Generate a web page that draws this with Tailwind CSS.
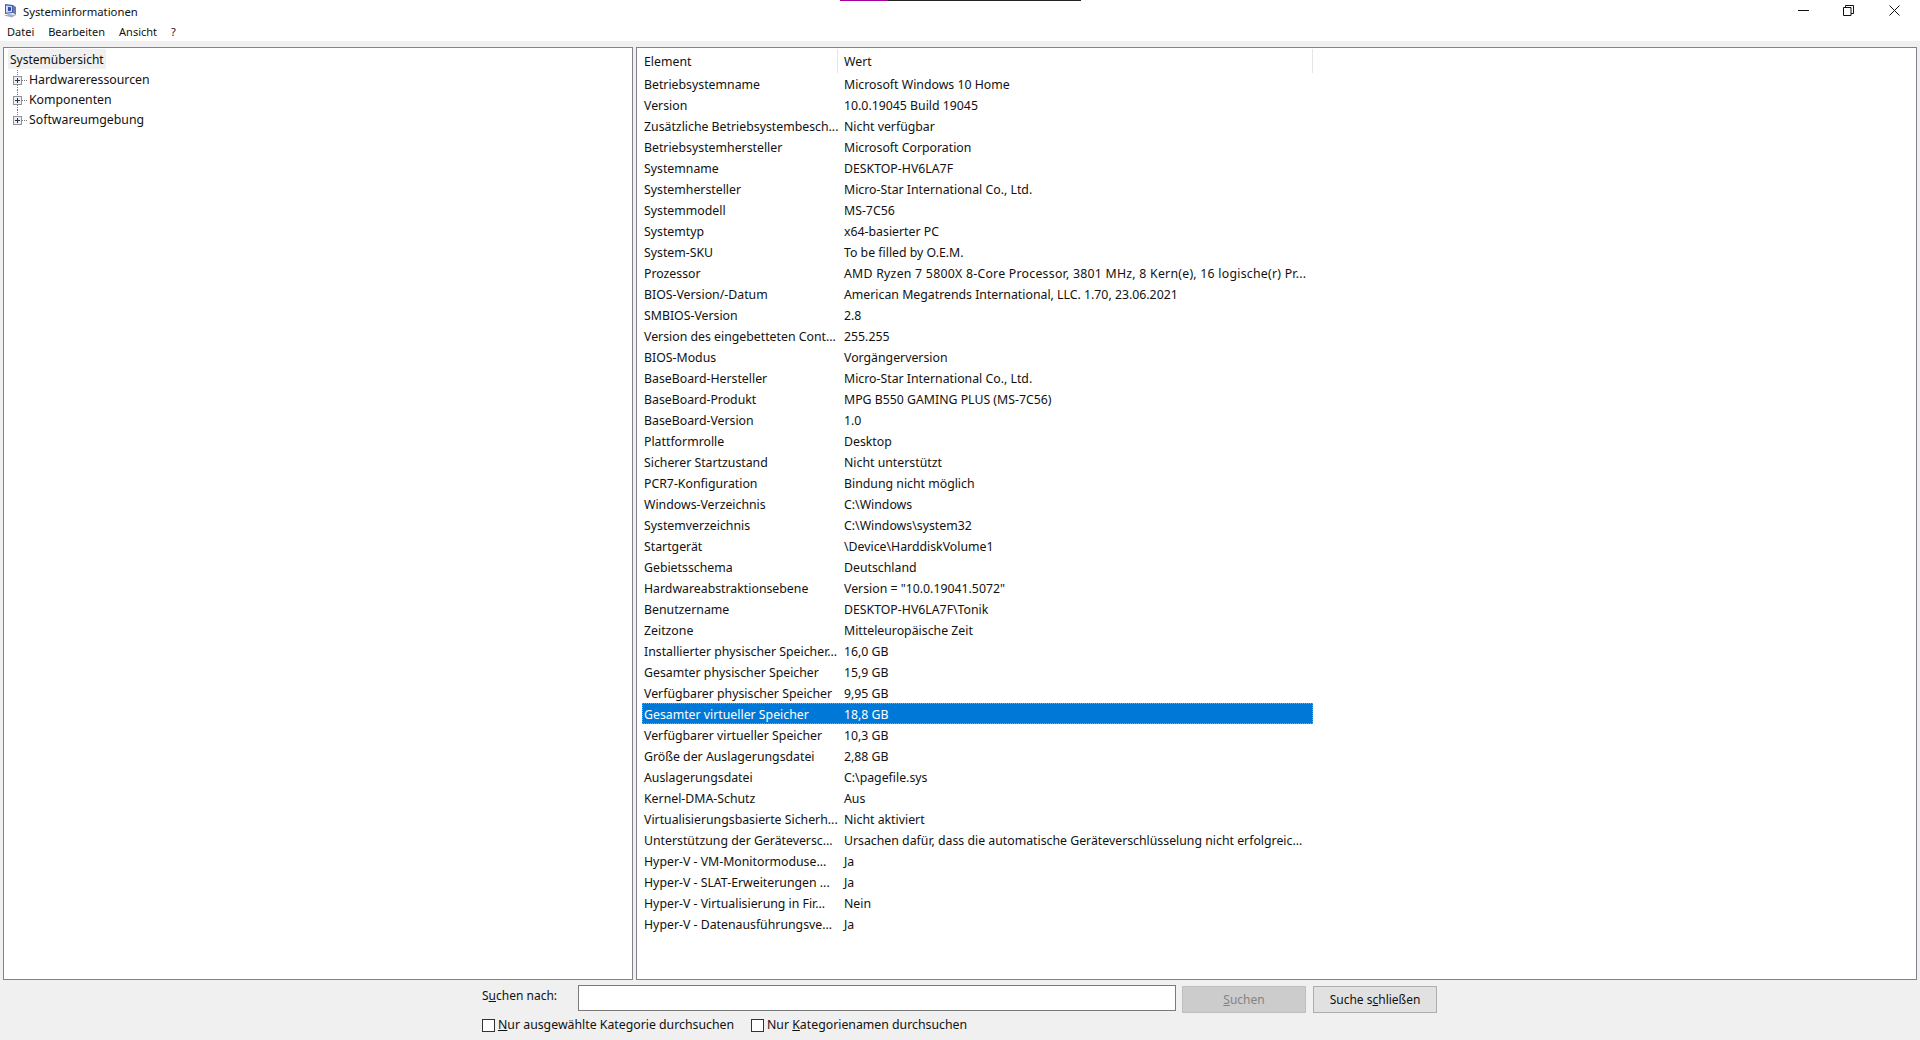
<!DOCTYPE html>
<html lang="de">
<head>
<meta charset="utf-8">
<title>Systeminformationen</title>
<script src="https://cdn.jsdelivr.net/npm/@tailwindcss/browser@4"></script>
</head>
<body class="w-[1920px] h-[1040px] overflow-hidden bg-[#f0f0f0] text-[12px] text-[#111] font-['Noto_Sans','Open_Sans',sans-serif]">

<!-- title + menu -->
<header class="relative h-[41px] bg-white">
  <div class="absolute top-0 left-[840px] flex h-[1px]">
    <div class="w-[48px] bg-[#a0009c]"></div>
    <div class="w-[193px] bg-[#222]"></div>
  </div>
  <div class="flex h-[25px] items-center">
    <svg class="self-start mt-[3px] ml-[3px] w-[15px] h-[15px]" viewBox="0 0 15 15">
      <path d="M2 1l8 1v8l-8 1z" fill="#3f5fb8"/>
      <path d="M3 2.500l6 .7v5.800l-6 .7z" fill="#cfdcf7"/>
      <path d="M5 4l3 .3v3.400l-3 .3z" fill="#2d4aa6"/>
      <path d="M10 2l3 2v8l-3-2z" fill="#6f7a94"/>
      <path d="M1 12.500l5-1.500 7 1-4 2.500z" fill="#a4adc0"/>
    </svg>
    <span class="ml-[5px] text-[11.3px]">Systeminformationen</span>
    <div class="ml-auto self-start mt-[5px] flex">
      <svg class="w-[11px] h-[11px] mr-[34px]" viewBox="0 0 11 11"><path d="M0 5.500h11" stroke="#111" fill="none"/></svg>
      <svg class="w-[11px] h-[11px] mr-[35px]" viewBox="0 0 11 11"><path d="M.5 2.500h7.500v8h-7.500zM2.500 2.500v-2h8v8h-2.500" stroke="#111" fill="none"/></svg>
      <svg class="w-[11px] h-[11px] mr-[20px]" viewBox="0 0 11 11"><path d="M.5.5l10 10M10.500.5l-10 10" stroke="#111" fill="none"/></svg>
    </div>
  </div>
  <nav class="flex h-[15px] items-center pl-[7px] gap-[14px] text-[11px]">
    <span>Datei</span><span>Bearbeiten</span><span>Ansicht</span><span>?</span>
  </nav>
</header>

<main class="flex h-[939px] pt-[6px] pl-[3px] pr-[3px] gap-[3px] text-[12.3px]">
  <!-- tree -->
  <section class="w-[630px] bg-white border border-[#82828f] pt-[1px] pl-[4px]">
    <div class="w-[98px] h-[20px] leading-[21px] pl-[2px] whitespace-nowrap bg-[#f0f0f0] text-[12px]">Systemübersicht</div>
    <ul class="pt-[1px]">
      <li class="flex items-center h-[20px]">
        <svg class="w-[21px] h-[20px]" viewBox="0 0 21 20">
          <path d="M9.500 0v6M9.500 15v5M14 10.500h5" stroke="#777" stroke-dasharray="1 1" fill="none"/>
          <rect x="5.500" y="6.500" width="8" height="8" fill="#eef0f5" stroke="#8f90a0"/>
          <path d="M7 10.500h5M9.500 8v5" stroke="#333" fill="none"/>
        </svg>
        <span>Hardwareressourcen</span>
      </li>
      <li class="flex items-center h-[20px]">
        <svg class="w-[21px] h-[20px]" viewBox="0 0 21 20">
          <path d="M9.500 0v6M9.500 15v5M14 10.500h5" stroke="#777" stroke-dasharray="1 1" fill="none"/>
          <rect x="5.500" y="6.500" width="8" height="8" fill="#eef0f5" stroke="#8f90a0"/>
          <path d="M7 10.500h5M9.500 8v5" stroke="#333" fill="none"/>
        </svg>
        <span>Komponenten</span>
      </li>
      <li class="flex items-center h-[20px]">
        <svg class="w-[21px] h-[20px]" viewBox="0 0 21 20">
          <path d="M9.500 0v6M14 10.500h5" stroke="#777" stroke-dasharray="1 1" fill="none"/>
          <rect x="5.500" y="6.500" width="8" height="8" fill="#eef0f5" stroke="#8f90a0"/>
          <path d="M7 10.500h5M9.500 8v5" stroke="#333" fill="none"/>
        </svg>
        <span>Softwareumgebung</span>
      </li>
    </ul>
  </section>

  <!-- list -->
  <section class="flex-1 bg-white border border-[#82828f] pt-[1px] pl-[5px]">
    <div class="flex h-[24px] w-[671px] leading-[26px]">
      <div class="w-[196px] pl-[2px] border-r border-[#e5e5e5]">Element</div>
      <div class="flex-1 pl-[6px] border-r border-[#e5e5e5]">Wert</div>
    </div>
    <div class="w-[671px] leading-[23px] whitespace-nowrap">
      <div class="flex h-[21px]"><div class="w-[196px] pl-[2px]">Betriebsystemname</div><div class="flex-1 pl-[6px]">Microsoft Windows 10 Home</div></div>
      <div class="flex h-[21px]"><div class="w-[196px] pl-[2px]">Version</div><div class="flex-1 pl-[6px]">10.0.19045 Build 19045</div></div>
      <div class="flex h-[21px]"><div class="w-[196px] pl-[2px]">Zusätzliche Betriebsystembesch...</div><div class="flex-1 pl-[6px]">Nicht verfügbar</div></div>
      <div class="flex h-[21px]"><div class="w-[196px] pl-[2px]">Betriebsystemhersteller</div><div class="flex-1 pl-[6px]">Microsoft Corporation</div></div>
      <div class="flex h-[21px]"><div class="w-[196px] pl-[2px]">Systemname</div><div class="flex-1 pl-[6px]">DESKTOP-HV6LA7F</div></div>
      <div class="flex h-[21px]"><div class="w-[196px] pl-[2px]">Systemhersteller</div><div class="flex-1 pl-[6px]">Micro-Star International Co., Ltd.</div></div>
      <div class="flex h-[21px]"><div class="w-[196px] pl-[2px]">Systemmodell</div><div class="flex-1 pl-[6px]">MS-7C56</div></div>
      <div class="flex h-[21px]"><div class="w-[196px] pl-[2px]">Systemtyp</div><div class="flex-1 pl-[6px]">x64-basierter PC</div></div>
      <div class="flex h-[21px]"><div class="w-[196px] pl-[2px]">System-SKU</div><div class="flex-1 pl-[6px]">To be filled by O.E.M.</div></div>
      <div class="flex h-[21px]"><div class="w-[196px] pl-[2px]">Prozessor</div><div class="flex-1 pl-[6px] tracking-[0.25px]">AMD Ryzen 7 5800X 8-Core Processor, 3801 MHz, 8 Kern(e), 16 logische(r) Pr...</div></div>
      <div class="flex h-[21px]"><div class="w-[196px] pl-[2px]">BIOS-Version/-Datum</div><div class="flex-1 pl-[6px]">American Megatrends International, LLC. 1.70, 23.06.2021</div></div>
      <div class="flex h-[21px]"><div class="w-[196px] pl-[2px]">SMBIOS-Version</div><div class="flex-1 pl-[6px]">2.8</div></div>
      <div class="flex h-[21px]"><div class="w-[196px] pl-[2px]">Version des eingebetteten Cont...</div><div class="flex-1 pl-[6px]">255.255</div></div>
      <div class="flex h-[21px]"><div class="w-[196px] pl-[2px]">BIOS-Modus</div><div class="flex-1 pl-[6px]">Vorgängerversion</div></div>
      <div class="flex h-[21px]"><div class="w-[196px] pl-[2px]">BaseBoard-Hersteller</div><div class="flex-1 pl-[6px]">Micro-Star International Co., Ltd.</div></div>
      <div class="flex h-[21px]"><div class="w-[196px] pl-[2px]">BaseBoard-Produkt</div><div class="flex-1 pl-[6px]">MPG B550 GAMING PLUS (MS-7C56)</div></div>
      <div class="flex h-[21px]"><div class="w-[196px] pl-[2px]">BaseBoard-Version</div><div class="flex-1 pl-[6px]">1.0</div></div>
      <div class="flex h-[21px]"><div class="w-[196px] pl-[2px]">Plattformrolle</div><div class="flex-1 pl-[6px]">Desktop</div></div>
      <div class="flex h-[21px]"><div class="w-[196px] pl-[2px]">Sicherer Startzustand</div><div class="flex-1 pl-[6px]">Nicht unterstützt</div></div>
      <div class="flex h-[21px]"><div class="w-[196px] pl-[2px]">PCR7-Konfiguration</div><div class="flex-1 pl-[6px]">Bindung nicht möglich</div></div>
      <div class="flex h-[21px]"><div class="w-[196px] pl-[2px]">Windows-Verzeichnis</div><div class="flex-1 pl-[6px]">C:\Windows</div></div>
      <div class="flex h-[21px]"><div class="w-[196px] pl-[2px]">Systemverzeichnis</div><div class="flex-1 pl-[6px]">C:\Windows\system32</div></div>
      <div class="flex h-[21px]"><div class="w-[196px] pl-[2px]">Startgerät</div><div class="flex-1 pl-[6px]">\Device\HarddiskVolume1</div></div>
      <div class="flex h-[21px]"><div class="w-[196px] pl-[2px]">Gebietsschema</div><div class="flex-1 pl-[6px]">Deutschland</div></div>
      <div class="flex h-[21px]"><div class="w-[196px] pl-[2px]">Hardwareabstraktionsebene</div><div class="flex-1 pl-[6px]">Version = "10.0.19041.5072"</div></div>
      <div class="flex h-[21px]"><div class="w-[196px] pl-[2px]">Benutzername</div><div class="flex-1 pl-[6px]">DESKTOP-HV6LA7F\Tonik</div></div>
      <div class="flex h-[21px]"><div class="w-[196px] pl-[2px]">Zeitzone</div><div class="flex-1 pl-[6px]">Mitteleuropäische Zeit</div></div>
      <div class="flex h-[21px]"><div class="w-[196px] pl-[2px]">Installierter physischer Speicher...</div><div class="flex-1 pl-[6px]">16,0 GB</div></div>
      <div class="flex h-[21px]"><div class="w-[196px] pl-[2px]">Gesamter physischer Speicher</div><div class="flex-1 pl-[6px]">15,9 GB</div></div>
      <div class="flex h-[21px]"><div class="w-[196px] pl-[2px]">Verfügbarer physischer Speicher</div><div class="flex-1 pl-[6px]">9,95 GB</div></div>
      <div class="flex h-[21px] bg-[#0078d7] text-white outline-1 outline-dotted -outline-offset-1 outline-[#ff8c00]"><div class="w-[196px] pl-[2px]">Gesamter virtueller Speicher</div><div class="flex-1 pl-[6px]">18,8 GB</div></div>
      <div class="flex h-[21px]"><div class="w-[196px] pl-[2px]">Verfügbarer virtueller Speicher</div><div class="flex-1 pl-[6px]">10,3 GB</div></div>
      <div class="flex h-[21px]"><div class="w-[196px] pl-[2px]">Größe der Auslagerungsdatei</div><div class="flex-1 pl-[6px]">2,88 GB</div></div>
      <div class="flex h-[21px]"><div class="w-[196px] pl-[2px]">Auslagerungsdatei</div><div class="flex-1 pl-[6px]">C:\pagefile.sys</div></div>
      <div class="flex h-[21px]"><div class="w-[196px] pl-[2px]">Kernel-DMA-Schutz</div><div class="flex-1 pl-[6px]">Aus</div></div>
      <div class="flex h-[21px]"><div class="w-[196px] pl-[2px]">Virtualisierungsbasierte Sicherh...</div><div class="flex-1 pl-[6px]">Nicht aktiviert</div></div>
      <div class="flex h-[21px]"><div class="w-[196px] pl-[2px]">Unterstützung der Geräteversc...</div><div class="flex-1 pl-[6px]">Ursachen dafür, dass die automatische Geräteverschlüsselung nicht erfolgreic...</div></div>
      <div class="flex h-[21px]"><div class="w-[196px] pl-[2px]">Hyper-V - VM-Monitormoduse...</div><div class="flex-1 pl-[6px]">Ja</div></div>
      <div class="flex h-[21px]"><div class="w-[196px] pl-[2px]">Hyper-V - SLAT-Erweiterungen ...</div><div class="flex-1 pl-[6px]">Ja</div></div>
      <div class="flex h-[21px]"><div class="w-[196px] pl-[2px]">Hyper-V - Virtualisierung in Fir...</div><div class="flex-1 pl-[6px]">Nein</div></div>
      <div class="flex h-[21px]"><div class="w-[196px] pl-[2px]">Hyper-V - Datenausführungsve...</div><div class="flex-1 pl-[6px]">Ja</div></div>
    </div>
  </section>
</main>

<!-- search -->
<footer class="pt-[5px] pl-[482px]">
  <div class="flex h-[28px]">
    <label class="w-[96px] pt-[2px]">S<u>u</u>chen nach:</label>
    <div class="w-[598px] h-[26px] bg-white border border-[#7a7a7a]"></div>
    <button class="ml-[6px] mt-[1px] w-[124px] h-[27px] bg-[#cccccc] border border-[#bfbfbf] text-[#838383]"><u>S</u>uchen</button>
    <button class="ml-[7px] mt-[1px] w-[124px] h-[27px] bg-[#e1e1e1] border border-[#adadad]">Suche s<u>c</u>hließen</button>
  </div>
  <div class="flex items-center h-[20px] mt-[2px] text-[12.3px]">
    <span class="w-[13px] h-[13px] bg-white border border-[#333]"></span>
    <span class="ml-[3px] w-[253px]"><u>N</u>ur ausgewählte Kategorie durchsuchen</span>
    <span class="w-[13px] h-[13px] bg-white border border-[#333]"></span>
    <span class="ml-[3px]">Nur <u>K</u>ategorienamen durchsuchen</span>
  </div>
</footer>
</body>
</html>
